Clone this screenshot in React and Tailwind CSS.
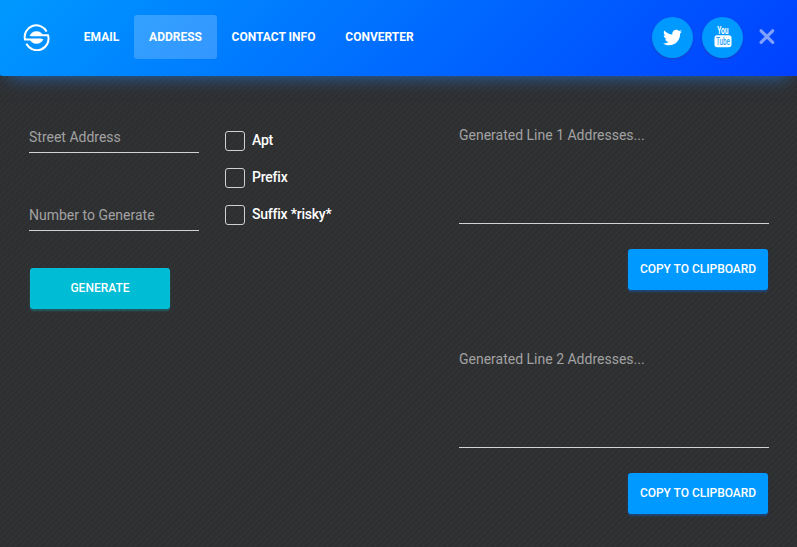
import { FaTwitter } from "react-icons/fa";

const NAV = [
  { label: "EMAIL", width: "w-[65px]" },
  { label: "ADDRESS", width: "w-[83px]", active: true },
  { label: "CONTACT INFO", width: "w-[113px]" },
  { label: "CONVERTER", width: "w-[99px]" },
];

function Logo() {
  return (
    <svg className="h-[27px] w-[27px]" viewBox="0 0 27 27" fill="none" stroke="white" strokeWidth="2">
      <path d="M23.6 7.6A11.6 11.6 0 0 0 2 15.6H18.5" />
      <path d="M3.4 19.6A11.6 11.6 0 0 0 25 11.3H8" />
      <path d="M6.6 12A7.4 7.4 0 0 1 20.4 12Z" fill="white" stroke="none" />
      <path d="M6.6 15A7.4 7.4 0 0 0 20.4 15Z" fill="white" stroke="none" />
    </svg>
  );
}

function YouTubeIcon() {
  return (
    <svg className="-mt-[1px] h-[22px] w-[18px] overflow-visible" viewBox="0 0 18 22" fontFamily="Roboto, sans-serif" fontWeight="700">
      <text x="3.2" y="8" fontSize="10" fill="white" textLength="11.4" lengthAdjust="spacingAndGlyphs">You</text>
      <rect x="0.5" y="9.2" width="17" height="12" rx="2.6" fill="white" />
      <text x="2" y="19" fontSize="10" fontWeight="500" fill="#2aa5ff" textLength="14" lengthAdjust="spacingAndGlyphs">Tube</text>
    </svg>
  );
}

function Field({ label }) {
  return (
    <div className="flex h-[32px] w-[170px] items-start border-b border-[#d2d2d2] text-[14px] leading-[32px] text-[#a2a2a2]">
      <span>{label}</span>
    </div>
  );
}

function Check({ label }) {
  return (
    <div className="flex h-[20px] items-center gap-[7px]">
      <span className="h-[20px] w-[20px] rounded-[3px] border border-[#d0d0d0]" />
      <span className="-mt-[2px] text-[14px] leading-[20px] font-medium tracking-[-0.22px] text-white">{label}</span>
    </div>
  );
}

function Output({ label }) {
  return (
    <div className="flex h-[224px] w-[310px] flex-col">
      <div className="h-[102px] border-b border-[#d2d2d2] pt-[3px] text-[14px] leading-[20px] text-[#a2a2a2]">{label}</div>
      <button className="mt-[25px] mr-px h-[41px] w-[140px] self-end rounded-[3px] bg-[#0099ff] pb-[2px] text-[12px] font-medium tracking-[-0.03px] whitespace-nowrap text-white shadow-[0_2px_2px_rgba(0,110,255,0.35)]">
        COPY TO CLIPBOARD
      </button>
    </div>
  );
}

export default function App() {
  return (
    <div className="flex h-[547px] w-[797px] flex-col overflow-hidden bg-[#303133] bg-[repeating-linear-gradient(135deg,#2d2e30_0px,#2d2e30_1px,#313234_2px,#313234_3.24px,#2d2e30_4.24px)] font-['Roboto',sans-serif]">
      <header className="flex h-[76px] shrink-0 items-start rounded-bl-[2px] bg-[linear-gradient(135deg,#0099ff,#0040ff)] shadow-[0_8px_18px_-8px_rgba(30,136,255,0.65)]">
        <div className="mt-[24px] ml-[23px]"><Logo /></div>
        <nav className="mt-[15px] ml-[19px] flex">
          {NAV.map((n) => (
            <a
              key={n.label}
              className={`${n.width} ${n.active ? "bg-white/20" : ""} flex h-[44px] items-center justify-center rounded-[3px] text-[12px] font-bold whitespace-nowrap text-white`}
            >
              {n.label}
            </a>
          ))}
        </nav>
        <div className="mt-[17px] ml-auto flex pr-[21px]">
          <span className="flex h-[41px] w-[41px] items-center justify-center rounded-full bg-[#0099ff] shadow-[0_1px_2px_rgba(60,60,120,0.5)]">
            <FaTwitter className="-mt-[1px] h-[19px] w-[19px] text-white" />
          </span>
          <span className="ml-[9px] flex h-[41px] w-[41px] items-center justify-center rounded-full bg-[#0099ff] shadow-[0_1px_2px_rgba(60,60,120,0.5)]">
            <YouTubeIcon />
          </span>
          <svg className="mt-[11px] ml-[15px] h-[18px] w-[18px]" viewBox="0 0 18 18" fill="none" stroke="#7fa0ff" strokeWidth="3.2" strokeLinecap="round">
            <path d="M3.1 2.8L14.7 14.4M14.7 2.8L3.1 14.4" />
          </svg>
        </div>
      </header>
      <main className="flex flex-1">
        <section className="ml-[29px] w-[170px] pt-[45px]">
          <Field label="Street Address" />
          <div className="h-[46px]" />
          <Field label="Number to Generate" />
          <button className="mt-[37px] ml-px h-[41px] w-[140px] rounded-[3px] bg-[#00bcd4] pb-[2px] text-[12px] font-medium text-white shadow-[0_2px_2px_rgba(0,188,212,0.3)]">
            GENERATE
          </button>
        </section>
        <section className="ml-[26px] flex w-[160px] flex-col gap-[17px] pt-[55px]">
          <Check label="Apt" />
          <Check label="Prefix" />
          <Check label="Suffix *risky*" />
        </section>
        <section className="ml-[74px] pt-[46px]">
          <Output label="Generated Line 1 Addresses..." />
          <Output label="Generated Line 2 Addresses..." />
        </section>
      </main>
    </div>
  );
}
